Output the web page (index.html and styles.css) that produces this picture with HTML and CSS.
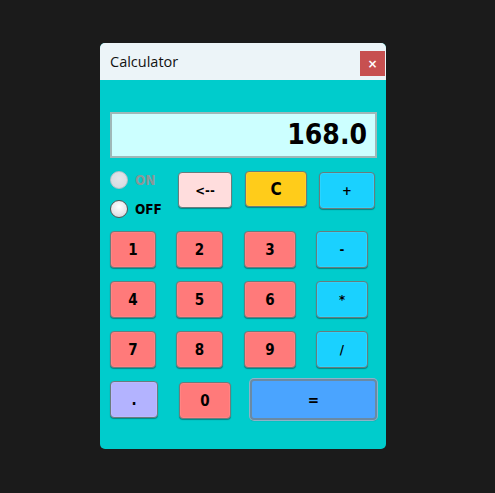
FILE: index.html
```html
<!DOCTYPE html>
<html>
<head>
<meta charset="utf-8">
<link rel="stylesheet" href="styles.css">
</head>
<body>
<div class="window">
  <div class="titlebar">
    <span class="title">Calculator</span>
    <span class="close">×</span>
  </div>
  <div class="content">
    <div class="display">168.0</div>
    <div class="row row-top">
      <div class="radios">
        <div class="radio disabled"><span class="dot"></span><span class="lbl">ON</span></div>
        <div class="radio"><span class="dot"></span><span class="lbl">OFF</span></div>
      </div>
      <div class="btn back w54">&lt;--</div>
      <div class="btn clear w62">C</div>
      <div class="btn op w56 plus">+</div>
    </div>
    <div class="row row-num">
      <div class="btn num w46">1</div>
      <div class="btn num w47">2</div>
      <div class="btn num w52">3</div>
      <div class="btn op w52">-</div>
    </div>
    <div class="row row-num">
      <div class="btn num w46">4</div>
      <div class="btn num w47">5</div>
      <div class="btn num w52">6</div>
      <div class="btn op w52">*</div>
    </div>
    <div class="row row-num">
      <div class="btn num w46">7</div>
      <div class="btn num w47">8</div>
      <div class="btn num w52">9</div>
      <div class="btn op w52">/</div>
    </div>
    <div class="row row-last">
      <div class="btn dot-btn w48">.</div>
      <div class="btn num w52 zero">0</div>
      <div class="btn eq">=</div>
    </div>
  </div>
</div>
</body>
</html>
```

FILE: styles.css
```css
html, body {
  margin: 0;
  padding: 0;
  background: #1b1b1b;
}
body {
  padding: 43px 0 0 100px;
  height: 493px;
  box-sizing: border-box;
}
.window {
  width: 286px;
  height: 406px;
  border-radius: 5px;
  overflow: hidden;
  background: #00cccc;
  display: flex;
  flex-direction: column;
}
.titlebar {
  height: 37px;
  flex: none;
  background: #ecf4f8;
  display: flex;
  justify-content: space-between;
  align-items: flex-start;
  padding-left: 10px;
  padding-right: 1px;
  box-sizing: border-box;
}
.title {
  font-family: "Open Sans", "Noto Sans", sans-serif;
  font-size: 14.5px;
  color: #111;
  line-height: 37px;
}
.close {
  margin-top: 8px;
  width: 25px;
  height: 25px;
  background: #c75050;
  color: #fff;
  font-family: "DejaVu Sans", sans-serif;
  font-weight: bold;
  font-size: 12px;
  display: flex;
  align-items: center;
  justify-content: center;
}
.content {
  padding: 32px 0 0 10px;
  display: flex;
  flex-direction: column;
}
.display {
  width: 267px;
  height: 46px;
  box-sizing: border-box;
  border: 2px solid #9fb8b8;
  background: #ccffff;
  font-family: "DejaVu Sans Condensed", "DejaVu Sans", sans-serif;
  font-weight: bold;
  font-size: 28px;
  color: #000;
  text-align: right;
  padding-right: 8px;
  line-height: 42px;
}
.row {
  display: flex;
  align-items: flex-start;
}
.row-top {
  margin-top: 13px;
  height: 47px;
}
.radios {
  width: 68px;
  display: flex;
  flex-direction: column;
  gap: 11px;
}
.radio {
  display: flex;
  align-items: center;
  height: 18px;
}
.radio .dot {
  width: 18px;
  height: 18px;
  box-sizing: border-box;
  border-radius: 50%;
  border: 1.5px solid #555;
  background: radial-gradient(circle at 50% 35%, #ffffff 0%, #e8e8ec 55%, #c8ccd4 100%);
}
.radio.disabled .dot {
  border-color: #b8c0c8;
  background: radial-gradient(circle at 50% 40%, #e4e6ea 0%, #d4d8de 100%);
}
.radio .lbl {
  margin-left: 7px;
  font-family: "DejaVu Sans Condensed", "DejaVu Sans", sans-serif;
  font-weight: bold;
  font-size: 13.5px;
  color: #000;
}
.radio.disabled .lbl {
  color: #8a9898;
}
.btn {
  height: 37px;
  box-sizing: border-box;
  border: 1px solid #6a7c7c;
  border-radius: 4px;
  box-shadow: 0 1px 1px rgba(0, 0, 0, 0.35), inset 0 0 0 1px rgba(255, 255, 255, 0.08);
  font-family: "DejaVu Sans Condensed", "DejaVu Sans", sans-serif;
  font-weight: bold;
  font-size: 15px;
  color: #000;
  display: flex;
  align-items: center;
  justify-content: center;
}
.w46 { width: 46px; }
.w47 { width: 47px; }
.w48 { width: 48px; }
.w52 { width: 52px; }
.w54 { width: 54px; }
.w56 { width: 56px; }
.w62 { width: 62px; }
.back {
  background: #ffdddd;
  margin-top: 1px;
  height: 36px;
  font-size: 13px;
}
.clear {
  background: #ffcc1a;
  margin-left: 13px;
  height: 36px;
  font-size: 17px;
}
.plus {
  margin-left: 12px;
  margin-top: 1px;
}
.op {
  background: #1ad1ff;
  font-size: 13px;
}
.num {
  background: #ff7a7a;
}
.row-num {
  margin-top: 13px;
  gap: 20px;
}
.row-num .btn:nth-child(3) { margin-left: 1px; }
.row-last {
  margin-top: 11px;
  height: 41px;
}
.dot-btn {
  background: #b3b3ff;
  margin-top: 2px;
}
.zero {
  margin-left: 21px;
  margin-top: 3px;
}
.eq {
  width: 127px;
  height: 41px;
  margin-left: 19px;
  background: #4aa4ff;
  border: 2px solid #6a8aa4;
  box-shadow: 0 0 0 1px #8eb2c8, 0 1px 1px rgba(0, 0, 0, 0.35);
  font-size: 15px;
}
```
